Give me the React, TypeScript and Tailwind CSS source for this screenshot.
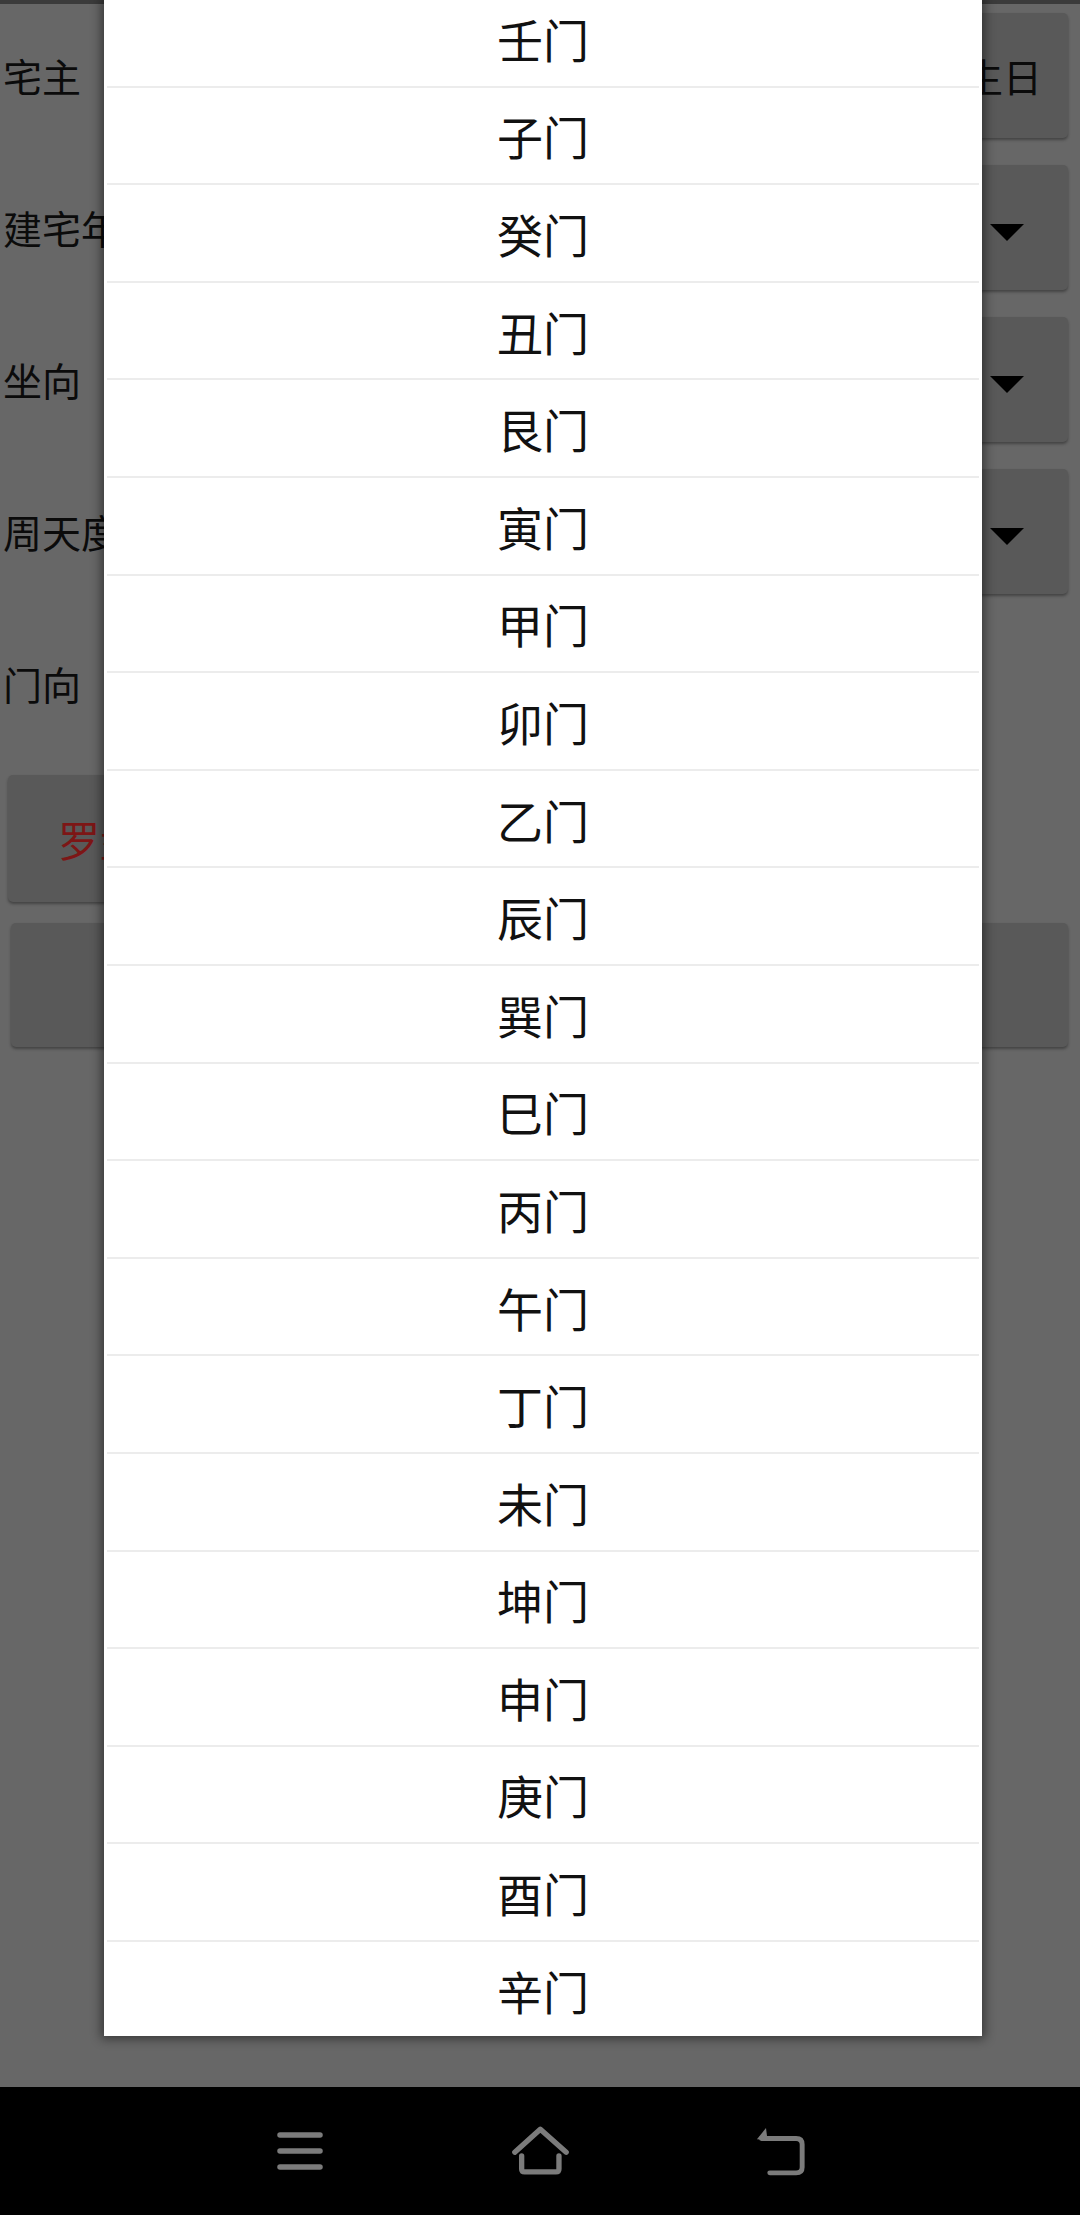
import React from 'react';

const doors = [
  '壬门', '子门', '癸门', '丑门', '艮门', '寅门', '甲门', '卯门', '乙门', '辰门', '巽门',
  '巳门', '丙门', '午门', '丁门', '未门', '坤门', '申门', '庚门', '酉门', '辛门',
];

function Caret() {
  return (
    <svg width="34" height="17" viewBox="0 0 34 17" className="mt-[10px]">
      <polygon points="0,0 34,0 17,17" fill="#000" />
    </svg>
  );
}

function Spinner() {
  return (
    <div className="ml-[160px] flex-1 h-full rounded-[5px] bg-[#595959] shadow-[0_2px_3px_rgba(0,0,0,0.35)] flex items-center justify-end pr-[44px]">
      <Caret />
    </div>
  );
}

function Label({ text }: { text: string }) {
  return <span className="w-[200px] shrink-0 text-[39px] leading-none text-[#0b0b0b]">{text}</span>;
}

function MenuIcon() {
  return (
    <svg width="46" height="38" viewBox="0 0 46 38">
      <g stroke="#7b7b7b" strokeWidth="5.5" strokeLinecap="round">
        <line x1="3" y1="3" x2="43" y2="3" />
        <line x1="3" y1="19" x2="43" y2="19" />
        <line x1="3" y1="35" x2="43" y2="35" />
      </g>
    </svg>
  );
}

function HomeIcon() {
  return (
    <svg width="59" height="50" viewBox="0 0 155 130">
      <g stroke="#7b7b7b" strokeWidth="14" strokeLinecap="round" strokeLinejoin="round" fill="none">
        <polyline points="10,68 77,8 145,68" />
        <path d="M28 78 V112 Q28 120 36 120 H118 Q126 120 126 112 V78" />
      </g>
    </svg>
  );
}

function BackIcon() {
  return (
    <svg width="55" height="52" viewBox="0 0 145 138">
      <g stroke="#7b7b7b" strokeWidth="13" strokeLinecap="round" strokeLinejoin="round" fill="none">
        <path d="M22 36 H114 Q130 36 130 52 V112 Q130 127 114 127 H44" />
      </g>
      <polygon points="10,38 34,8 38,40" fill="#7b7b7b" />
    </svg>
  );
}

export default function App() {
  return (
    <div className="relative w-[1080px] h-[2215px] overflow-hidden bg-[#676767] flex flex-col font-['Noto_Sans_CJK_SC',sans-serif]">
      {/* dimmed page behind the picker */}
      <div className="h-[4px] bg-[#3b3b3b]" />
      <div className="flex-1 flex flex-col pt-[9px] pl-[3px] pr-[12px]">
        <div className="flex items-center h-[125px]">
          <Label text="宅主" />
          <div className="flex-1" />
          <button className="w-[150px] h-full rounded-[5px] bg-[#595959] shadow-[0_2px_3px_rgba(0,0,0,0.35)] flex items-center justify-end pr-[26px] text-[39px] text-[#0b0b0b]">
            生日
          </button>
        </div>
        <div className="flex items-center h-[125px] mt-[27px]">
          <Label text="建宅年" />
          <Spinner />
        </div>
        <div className="flex items-center h-[125px] mt-[27px]">
          <Label text="坐向" />
          <Spinner />
        </div>
        <div className="flex items-center h-[125px] mt-[27px]">
          <Label text="周天度" />
          <Spinner />
        </div>
        <div className="flex items-center h-[125px] mt-[27px]">
          <Label text="门向" />
        </div>
        <button className="mt-[29px] ml-[5px] w-[480px] h-[127px] rounded-[5px] bg-[#595959] shadow-[0_2px_3px_rgba(0,0,0,0.35)] flex items-center pl-[50px] text-[42px] text-[#7d1616]">
          罗盘
        </button>
        <div className="mt-[21px] ml-[8px] h-[124px] rounded-[5px] bg-[#595959] shadow-[0_2px_3px_rgba(0,0,0,0.35)]" />
      </div>

      {/* navigation bar */}
      <div className="h-[128px] bg-black flex items-center justify-center">
        <div className="w-[240px] flex justify-center"><MenuIcon /></div>
        <div className="w-[240px] flex justify-center"><HomeIcon /></div>
        <div className="w-[240px] flex justify-center"><BackIcon /></div>
      </div>

      {/* picker dialog */}
      <div className="absolute left-[104px] top-0 w-[878px] h-[2036px] bg-white overflow-hidden shadow-[0_0_10px_3px_rgba(0,0,0,0.45)]">
        <div className="-mt-[10px] flex flex-col">
          {doors.map((d) => (
            <div key={d} className="h-[97.6px] shrink-0 flex flex-col">
              <div className="flex-1 flex items-center justify-center text-[46px] leading-none text-[#111]">{d}</div>
              <div className="mx-[3px] h-[2px] bg-[#ececec]" />
            </div>
          ))}
        </div>
      </div>
    </div>
  );
}
